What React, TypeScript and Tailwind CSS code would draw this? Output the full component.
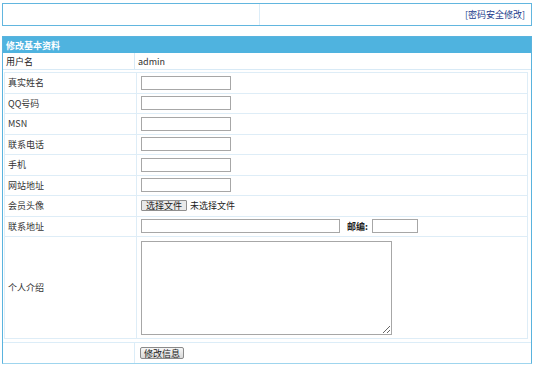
const FIELDS = ['真实姓名', 'QQ号码', 'MSN', '联系电话', '手机', '网站地址'];

function TextBox({ className = '' }: { className?: string }) {
  return <span className={`block h-[14px] border border-[#a7a7a7] bg-white ${className}`} />;
}

function Row({ label, children, className = 'h-[20.5px]' }: { label: string; children?: React.ReactNode; className?: string }) {
  return (
    <div className={`flex border-b border-[#deedf7] last:border-b-0 ${className}`}>
      <div className="flex w-[132px] shrink-0 items-center border-r border-[#deedf7] pl-[3px]">{label}</div>
      <div className="flex flex-1 items-center pl-[4px]">{children}</div>
    </div>
  );
}

export default function App() {
  return (
    <div
      className="h-[367px] w-[538px] bg-white pl-[2px] pt-[3px] text-[9px] leading-none text-[#333]"
      style={{ fontFamily: "'Noto Sans CJK SC', 'Liberation Sans', sans-serif" }}
    >
      {/* 顶部工具栏 */}
      <div className="flex h-[23px] w-[530px] border border-[#62b6df]">
        <div className="w-[257px] border-r border-[#dcedf8]" />
        <div className="flex flex-1 items-center justify-end pr-[6px] text-[#1c3c8c]">[密码安全修改]</div>
      </div>

      <div className="mt-[10px] w-[530px] border border-[#5ab3de] border-b-[#9fd5ee]">
        <div className="flex h-[16px] items-center bg-[#4fb3df] pl-[3px] font-bold text-white">修改基本资料</div>

        <div className="flex h-[17px] border-b border-[#d8eaf6]">
          <div className="flex w-[132px] items-center border-r border-[#d8eaf6] pl-[3px] text-[#222]">用户名</div>
          <div className="flex items-center pl-[3px] text-[#333]">admin</div>
        </div>

        <div className="ml-[1px] mt-[2px] w-[524px] border border-[#deedf7]">
          {FIELDS.map((f) => (
            <Row key={f} label={f}>
              <TextBox className="w-[90px]" />
            </Row>
          ))}
          <Row label="会员头像">
            <span className="flex items-center gap-[3px]">
              <span className="flex h-[11px] items-center rounded-[1px] border border-[#8f8f8f] bg-[#e9e9e9] px-[4px] text-[#222]">
                选择文件
              </span>
              <span className="text-[#222]">未选择文件</span>
            </span>
          </Row>
          <Row label="联系地址">
            <TextBox className="h-[13px] w-[199px]" />
            <span className="ml-[7px] font-bold text-[#222]">邮编:</span>
            <TextBox className="ml-[4px] h-[13px] w-[46px]" />
          </Row>
          <Row label="个人介绍" className="h-[101px]">
            <textarea className="h-[94px] w-[251px] resize border border-[#a7a7a7] bg-white outline-none" />
          </Row>
        </div>

        <div className="mt-[3px] flex h-[21px] border-t border-[#dcedf8]">
          <div className="w-[132px] border-r border-[#dcedf8]" />
          <div className="flex items-center pl-[5px]">
            <span className="flex h-[12px] w-[44px] items-center justify-center rounded-[2px] border border-[#8a8a8a] bg-gradient-to-b from-[#f6f6f6] to-[#d9d9d9] text-[#222]">
              修改信息
            </span>
          </div>
        </div>
      </div>
    </div>
  );
}
